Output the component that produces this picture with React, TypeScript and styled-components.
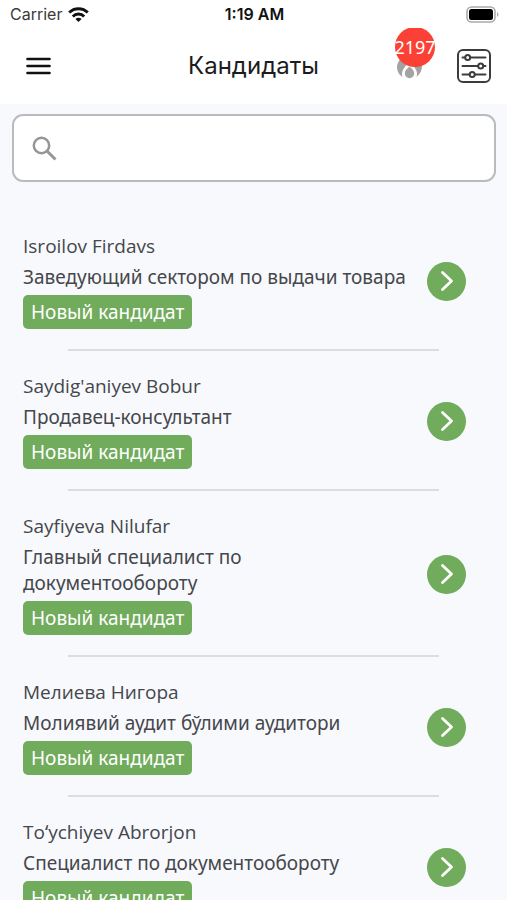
import React from "react";
import styled, { createGlobalStyle } from "styled-components";

const GlobalStyle = createGlobalStyle`
  * { box-sizing: border-box; }
  body {
    margin: 0;
    background: #f8f9fd;
    color: #45474b;
    font-family: "Noto Sans", "Open Sans", sans-serif;
  }
  button { font: inherit; border: 0; padding: 0; background: none; cursor: pointer; }
`;

const Page = styled.div`
  display: flex;
  flex-direction: column;
  height: 100vh;
  overflow: hidden;
`;

const StatusBar = styled.div`
  display: grid;
  grid-template-columns: 1fr auto 1fr;
  align-items: center;
  height: 28px;
  flex: none;
  padding: 0 8px 0 10px;
  background: #fff;
  color: #3a3a3a;
  font-family: Inter, "Liberation Sans", sans-serif;
  font-size: 16px;
  line-height: 28px;
`;

const Carrier = styled.div`
  display: flex;
  align-items: center;
  gap: 6px;
`;

const Clock = styled.time`
  color: #111;
  font-weight: 600;
`;

const Battery = styled.svg`
  justify-self: end;
`;

const Header = styled.header`
  display: grid;
  grid-template-columns: 1fr auto 1fr;
  align-items: center;
  flex: none;
  height: 76px;
  padding: 0 15px;
  background: #fff;
`;

const MenuButton = styled.button`
  justify-self: start;
  display: flex;
  margin-left: 10px;
`;

const Title = styled.h1`
  margin: 0;
  color: #1c1c1e;
  font-family: Inter, "Liberation Sans", sans-serif;
  font-size: 24px;
  font-weight: 400;
  line-height: 32px;
`;

const Actions = styled.div`
  display: flex;
  align-items: center;
  justify-self: end;
  align-self: stretch;
  gap: 18px;
`;

const HotButton = styled.button`
  position: relative;
  display: flex;
  align-items: flex-end;
  justify-content: center;
  align-self: flex-start;
  width: 44px;
  height: 52px;
  overflow: hidden;
`;

const FlameIcon = styled.svg`
  margin-right: 13px;
`;

const Count = styled.span`
  position: absolute;
  top: -1px;
  left: 1px;
  display: flex;
  align-items: center;
  justify-content: center;
  width: 40px;
  height: 40px;
  border-radius: 50%;
  background: #fb4136;
  color: #fff;
  font-size: 18px;
  line-height: 40px;
`;

const FilterButton = styled.button`
  display: flex;
`;

const Search = styled.label`
  display: flex;
  align-items: center;
  flex: none;
  gap: 12px;
  height: 68px;
  margin: 10px 11px 0 12px;
  padding: 0 18px;
  border: 2px solid #b9bbbd;
  border-radius: 11px;
  background: #fff;
`;

const SearchInput = styled.input`
  flex: 1;
  min-width: 0;
  height: 40px;
  border: 0;
  outline: 0;
  background: none;
  color: inherit;
  font: inherit;
  font-size: 19px;
`;

const List = styled.ul`
  flex: 1;
  min-height: 0;
  margin: 29px 0 0;
  padding: 0;
  list-style: none;
  overflow-y: auto;
  scrollbar-width: none;
`;

const Candidate = styled.li`
  padding: 22px 41px 0 23px;

  &::after {
    content: "";
    display: block;
    height: 2px;
    margin: 20px 27px 0 45px;
    background: #dbdde0;
  }
`;

const CandidateRow = styled.div`
  display: flex;
  align-items: center;
  justify-content: space-between;
  gap: 16px;
`;

const Details = styled.div`
  display: flex;
  flex-direction: column;
  align-items: flex-start;
  gap: 5px;
  min-width: 0;
`;

const Name = styled.h2`
  margin: 0;
  font-family: "Open Sans", "Noto Sans", sans-serif;
  font-size: 19px;
  font-weight: 400;
  line-height: 26px;
`;

const Role = styled.p`
  margin: 0;
  font-size: 19px;
  line-height: 26px;
`;

const Status = styled.span`
  height: 34px;
  padding: 0 8px;
  border-radius: 5px;
  background: #71ab5c;
  color: #fff;
  font-size: 19px;
  line-height: 34px;
`;

const OpenButton = styled.button`
  display: flex;
  align-items: center;
  justify-content: center;
  flex: none;
  width: 39px;
  height: 39px;
  border-radius: 50%;
  && { background: #71ab5c; }
`;

const candidates = [
  { name: "Isroilov Firdavs", role: "Заведующий сектором по выдачи товара" },
  { name: "Saydig'aniyev Bobur", role: "Продавец-консультант" },
  { name: "Sayfiyeva Nilufar", role: "Главный специалист по документообороту" },
  { name: "Мелиева Нигора", role: "Молиявий аудит бўлими аудитори" },
  { name: "Toʻychiyev Abrorjon", role: "Специалист по документообороту" },
];

export default function App() {
  return (
    <>
      <GlobalStyle />
      <Page>
        <StatusBar>
          <Carrier>
            Carrier
            <svg width="21" height="15" viewBox="0 0 21 15" fill="none" stroke="#111" strokeWidth="2.8" aria-hidden="true">
              <path d="M1.2 5.6a13.2 13.2 0 0 1 18.6 0" />
              <path d="M4.8 9.4a8 8 0 0 1 11.4 0" />
              <path d="M7.4 12.1a4.5 4.5 0 0 1 6.2 0L10.5 15z" fill="#111" stroke="none" />
            </svg>
          </Carrier>
          <Clock>1:19 AM</Clock>
          <Battery width="33" height="17" viewBox="0 0 33 17" aria-hidden="true">
            <rect x="1" y="1" width="28" height="15" rx="4.5" fill="#fff" stroke="#aaa" strokeWidth="1.6" />
            <rect x="3" y="3" width="24" height="11" rx="2.5" fill="#000" />
            <path d="M31 6v5c2-1 2-4 0-5z" fill="#aaa" />
          </Battery>
        </StatusBar>
        <Header>
          <MenuButton aria-label="Меню">
            <svg width="27" height="20" viewBox="0 0 27 20" stroke="#111" strokeWidth="2.6" strokeLinecap="round">
              <path d="M2.5 3h22M2.5 10h22M2.5 17h22" />
            </svg>
          </MenuButton>
          <Title>Кандидаты</Title>
          <Actions>
            <HotButton aria-label="Горячие кандидаты: 2197">
              <FlameIcon width="27" height="32" viewBox="0 0 27 32" aria-hidden="true">
                <path d="M13 0c7 3 13 10 13 18 0 6-4 11-9 12.500H10C5 29 1 25 1 19 1 13 7 8 13 0z" fill="#a3a3a3" />
                <path d="M13.500 14c4 3.500 7.500 7.500 7.500 12 0 3-1.500 6-3 6H9c-1.500 0-3-3-3-6 0-4.500 3.500-8.500 7.500-12z" fill="#fff" />
                <path d="M13.500 18.500c2.700 2.300 4.700 4.300 4.700 7a4.700 4.700 0 0 1-9.400 0c0-2.700 2-4.700 4.700-7z" fill="#a3a3a3" />
              </FlameIcon>
              <Count>2197</Count>
            </HotButton>
            <FilterButton aria-label="Фильтр">
              <svg width="36" height="36" viewBox="0 0 36 36" fill="none" stroke="#3c3c3e" strokeWidth="2" strokeLinecap="round">
                <rect x="2" y="2" width="32" height="32" rx="5" />
                <path d="M6.500 9.500H9M14.500 9.500h15M6.500 18h15.500M27.500 18h2M6.500 26.500H13.500M19 26.500h10.500" />
                <circle cx="11.700" cy="9.500" r="2.500" />
                <circle cx="24.700" cy="18" r="2.500" />
                <circle cx="16.200" cy="26.500" r="2.500" />
              </svg>
            </FilterButton>
          </Actions>
        </Header>
        <Search>
          <svg width="25" height="25" viewBox="0 0 25 25" fill="none" stroke="#969696" strokeWidth="2.500" aria-hidden="true">
            <circle cx="9.500" cy="9.500" r="7.700" />
            <path d="M15 15l8.500 8.500" strokeWidth="3" />
          </svg>
          <SearchInput type="search" aria-label="Поиск" />
        </Search>
        <List>
          {candidates.map((c) => (
            <Candidate key={c.name}>
              <CandidateRow>
                <Details>
                  <Name>{c.name}</Name>
                  <Role>{c.role}</Role>
                  <Status>Новый кандидат</Status>
                </Details>
                <OpenButton aria-label={`Открыть: ${c.name}`}>
                  <svg width="14" height="22" viewBox="0 0 14 22" fill="none" stroke="#fff" strokeWidth="2.800" strokeLinecap="round" strokeLinejoin="round">
                    <path d="M2.500 2.500l9 8.500-9 8.500" />
                  </svg>
                </OpenButton>
              </CandidateRow>
            </Candidate>
          ))}
        </List>
      </Page>
    </>
  );
}
